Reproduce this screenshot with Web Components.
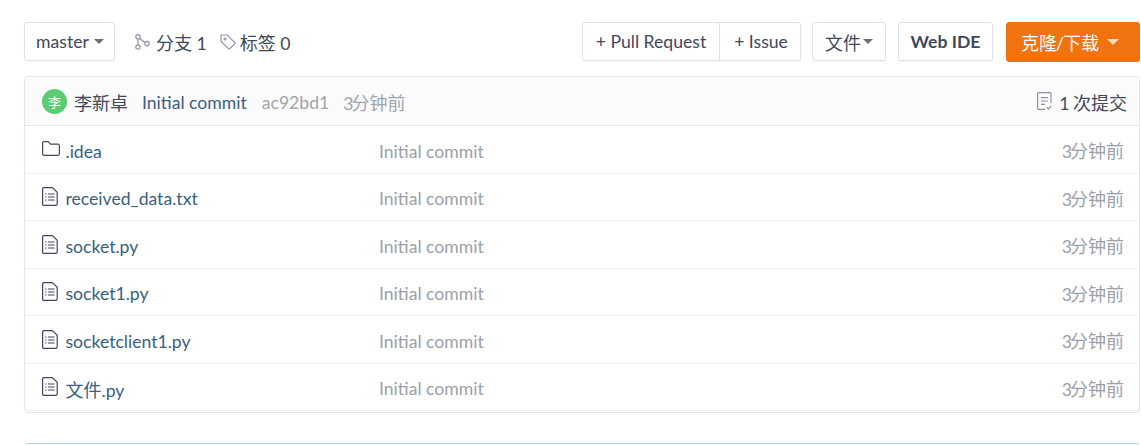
<!DOCTYPE html>
<html>
<head>
<meta charset="utf-8">
<title>repo</title>
<style>
  html, body { margin: 0; padding: 0; height: 445px; overflow: hidden; background: #FFF; }
  body { font-family: Lato, 'Noto Sans CJK SC', sans-serif; font-size: 17.6px; color: #40485B; }
  .zh { font-size: 18px; }
</style>
</head>
<body>
<repo-page></repo-page>

<script>
const caret = `<svg class="caret" width="10" height="5" viewBox="0 0 10 5"><path d="M0 0h10L5 5z" fill="currentColor"/></svg>`;

// CJK runs are a touch larger than the latin text next to them
const zh = (text) => `<span style="font-size:18px">${text}</span>`;
const ago = `<span style="margin-right:-2px">3</span>${zh('分钟前')}`;

const icons = {
  folder: `<svg width="18" height="16" viewBox="0 0 18 16" fill="none" stroke="#40485B" stroke-width="1.2"><path d="M.6 3.600V1.800A1.200 1.200 0 0 1 1.800.6h4.400l2.200 2.600h7.400a1.600 1.600 0 0 1 1.600 1.600v8a1.600 1.600 0 0 1-1.600 1.600H2.200A1.600 1.600 0 0 1 .6 13.200z"/></svg>`,
  file: `<svg width="16" height="19" viewBox="0 0 16 19" fill="none" stroke="#40485B" stroke-width="1.2"><path d="M1.800.6h8.600l4.800 4.600v11.600a1.600 1.600 0 0 1-1.600 1.600H1.800A1.200 1.200 0 0 1 .6 16.800V1.800A1.200 1.200 0 0 1 1.800.6z"/><path d="M3.200 7h1.400M6 7h6.600M3.200 10h1.400M6 10h6.600M3.200 13h1.400M6 13h6.600"/></svg>`,
  branch: `<svg width="15" height="16" viewBox="0 0 15 16" fill="none" stroke="#8C92A4" stroke-width="1.2"><circle cx="3" cy="2.800" r="2.200"/><circle cx="3" cy="13" r="2.200"/><circle cx="12" cy="9.600" r="2.200"/><path d="M3 5v5.800M4.600 4.400 10 8.400"/></svg>`,
  tag: `<svg width="16" height="16" viewBox="0 0 16 16" fill="none" stroke="#8C92A4" stroke-width="1.2"><path d="M1 1.800A.8.8 0 0 1 1.800 1h5.400l7.400 7.400a1 1 0 0 1 0 1.400l-4.800 4.800a1 1 0 0 1-1.400 0L1 7.200z"/><circle cx="5" cy="5" r="1"/></svg>`,
  commits: `<svg width="15" height="19" viewBox="0 0 15 19" fill="none" stroke="#8C92A4" stroke-width="1.2"><path d="M14 11V1.800A1.200 1.200 0 0 0 12.800.6H1.800A1.200 1.200 0 0 0 .6 1.800v14.400a1.200 1.200 0 0 0 1.200 1.200H8"/><path d="M4 5.600h7M4 9h7M4 12.400h4M9.600 15.400l1.800 1.800 3-3.400"/></svg>`
};


class UiButton extends HTMLElement {
  constructor(){
    super();
    this.attachShadow({ mode: 'open' });
    this.shadowRoot.innerHTML = `
      <style>
        :host {
          display: inline-flex;
          align-items: center;
          justify-content: center;
          box-sizing: border-box;
          height: 39px;
          padding: 0 12px;
          background: #FFF;
          border: 1px solid #DCE3E8;
          border-radius: 3px;
          box-shadow: 0 1px 2px rgba(0,0,0,0.04);
          color: #40485B;
          white-space: nowrap;
        }
      </style>
      <slot></slot>`;
  }
}


class BranchBar extends HTMLElement {
  constructor(){
    super();
    this.attachShadow({ mode: 'open' });
    this.shadowRoot.innerHTML = `
      <style>
        :host { display: flex; align-items: flex-start; height: 40px; }
        .caret { color: #6A6F7C; }
        .master { width: 91px; gap: 5px; padding: 0 0 0 1px; }
        .meta { display: flex; align-items: center; gap: 6px; height: 39px; margin-left: 20px; }
        .meta + .meta { margin-left: 13px; gap: 4px; }
        .right { display: flex; align-items: flex-start; margin-left: auto; }
        .pr { width: 138px; padding: 0; border-radius: 3px 0 0 3px; }
        .issue { width: 81px; padding: 0 0 0 2px; border-left: 0; border-radius: 0 3px 3px 0; }
        .files { width: 74px; padding: 0; gap: 2px; margin-left: 11px; }
        .ide { width: 95px; padding: 0; margin-left: 12px; font-weight: 700; }
        .clone {
          width: 134px; height: 40px; padding: 0 6px 0 0; gap: 8px; margin-left: 13px;
          background: #F1730F; border-color: #F1730F; color: #FFF;
        }
        .clone .caret { color: #FBD9BC; width: 12px; height: 6px; }
        .slash { margin: 0 -1px; }
      </style>
      <ui-button class="master">master ${caret}</ui-button>
      <span class="meta">${icons.branch}<span>${zh('分支')} 1</span></span>
      <span class="meta">${icons.tag}<span>${zh('标签')} 0</span></span>
      <div class="right">
        <ui-button class="pr">+ Pull Request</ui-button>
        <ui-button class="issue">+ Issue</ui-button>
        <ui-button class="files">${zh('文件')} ${caret}</ui-button>
        <ui-button class="ide">Web IDE</ui-button>
        <ui-button class="clone"><span>${zh('克隆')}<span class="slash">/</span>${zh('下载')}</span>${caret}</ui-button>
      </div>`;
  }
}


class CommitHeader extends HTMLElement {
  constructor(){
    super();
    this.attachShadow({ mode: 'open' });
    this.shadowRoot.innerHTML = `
      <style>
        :host {
          display: flex;
          align-items: center;
          height: 49px;
          padding: 0 12px 0 17px;
          background: #FBFBFC;
          border-bottom: 1px solid #E3E6EB;
          border-radius: 4px 4px 0 0;
          box-sizing: border-box;
        }
        .avatar {
          width: 25px; height: 25px; margin-right: 7px; border-radius: 50%;
          background: #5CCB71; color: #FFF; font-size: 13px;
          display: flex; align-items: center; justify-content: center;
        }
        .who, .msg, .sha, .time, .num { padding-top: 2px; }
        .msg { margin-left: 14px; color: #3A5F82; }
        .sha { margin-left: 15px; color: #A0A4AE; }
        .time { margin-left: 14px; color: #A0A4AE; }
        .count { margin-left: auto; display: flex; align-items: center; gap: 7px; }
      </style>
      <span class="avatar">李</span>
      <span class="who">${zh('李新卓')}</span>
      <span class="msg">Initial commit</span>
      <span class="sha">ac92bd1</span>
      <span class="time">${ago}</span>
      <span class="count">${icons.commits}<span class="num"><span style="margin-right:-1px">1</span> ${zh('次提交')}</span></span>`;
  }
}


class FileRow extends HTMLElement {
  constructor(){
    super();
    const icon = this.getAttribute('type') === 'dir' ? icons.folder : icons.file;
    this.attachShadow({ mode: 'open' });
    this.shadowRoot.innerHTML = `
      <style>
        :host {
          display: flex;
          align-items: center;
          box-sizing: border-box;
          height: 47.5px;
          padding: 0 15px 0 17px;
          border-bottom: 1px solid #EEF1F4;
        }
        .name { display: flex; align-items: center; width: 337px; color: #3A5F82; }
        .icon { display: flex; flex: none; width: 23.5px; }
        .label, .msg { padding-top: 4px; }
        .msg { color: #9B9FA9; }
        .time { margin-left: auto; padding-top: 2px; color: #9B9FA9; }
      </style>
      <span class="name"><span class="icon">${icon}</span><span class="label"><slot></slot></span></span>
      <span class="msg">Initial commit</span>
      <span class="time">${ago}</span>`;
  }
}


class FileList extends HTMLElement {
  constructor(){
    super();
    this.attachShadow({ mode: 'open' });
    this.shadowRoot.innerHTML = `
      <style>
        :host {
          display: block;
          margin-top: 14px;
          border: 1px solid #E3E6EB;
          border-radius: 4px;
          padding-bottom: 1px;
          box-shadow: 0 1px 1px rgba(0,0,0,0.03);
        }
      </style>
      <commit-header></commit-header>
      <slot></slot>`;
  }
}


class RepoPage extends HTMLElement {
  constructor(){
    super();
    this.attachShadow({ mode: 'open' });
    this.shadowRoot.innerHTML = `
      <style>
        :host { display: block; padding: 22px 1px 0 24px; }
        .notice {
          height: 20px; margin-top: 30px;
          background: #F1FBFB;
          border: 1px solid #A9DCDC; border-radius: 4px;
        }
      </style>
      <branch-bar></branch-bar>
      <file-list>
        <file-row type="dir">.idea</file-row>
        <file-row>received_data.txt</file-row>
        <file-row>socket.py</file-row>
        <file-row>socket1.py</file-row>
        <file-row>socketclient1.py</file-row>
        <file-row><span style="font-size:18px">文件</span>.py</file-row>
      </file-list>
      <div class="notice"></div>`;
  }
}


window.customElements.define('ui-button', UiButton);
window.customElements.define('branch-bar', BranchBar);
window.customElements.define('commit-header', CommitHeader);
window.customElements.define('file-row', FileRow);
window.customElements.define('file-list', FileList);
window.customElements.define('repo-page', RepoPage);
</script>
</body>
</html>
